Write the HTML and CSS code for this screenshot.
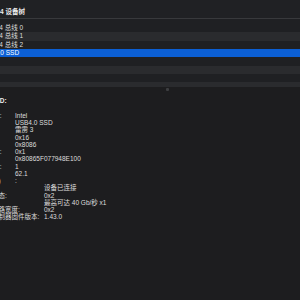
FILE: index.html
```html
<!DOCTYPE html>
<html lang="zh-CN">

<head>
    <meta charset="UTF-8" />
    <meta name="viewport" content="width=device-width, initial-scale=1.0" />
    <title>系统信息 - 雷雳/USB4</title>
    <link rel="stylesheet" href="styles.css">
</head>

<body>
    <div class="header">
        <span class="title">雷雳/USB4 设备树</span>
    </div>

    <div class="tree">
        <div class="tree-row"><span class="bus">USB4 总线 0</span></div>
        <div class="tree-row stripe"><span class="bus">USB4 总线 1</span></div>
        <div class="tree-row"><span class="bus">USB4 总线 2</span></div>
        <div class="tree-row selected"><span class="device">USB4.0 SSD</span></div>
        <div class="tree-row"></div>
        <div class="tree-row stripe"></div>
        <div class="tree-row"></div>
        <div class="tree-row stripe"></div>
    </div>

    <div class="divider">
        <div class="handle"></div>
    </div>

    <div class="details">
        <div class="heading">USB4.0 SSD:</div>
        <div class="blank"></div>

        <div class="kv"><span class="key">供应商名称:</span><span>Intel</span></div>
        <div class="kv"><span class="key">设备名称:</span><span>USB4.0 SSD</span></div>
        <div class="kv"><span class="key">模式:</span><span>雷雳 3</span></div>
        <div class="kv"><span class="key">设备 ID:</span><span>0x16</span></div>
        <div class="kv"><span class="key">供应商 ID:</span><span>0x8086</span></div>
        <div class="kv"><span class="key">设备修订版:</span><span>0x1</span></div>
        <div class="kv"><span class="key">UID:</span><span>0x80865F077948E100</span></div>
        <div class="kv"><span class="key">路由字符串:</span><span>1</span></div>
        <div class="kv"><span class="key">固件版本:</span><span>62.1</span></div>
        <div class="kv port"><span class="key">端口 (上游)</span><span>:</span></div>

        <div class="kv sub"><span class="key">状态:</span><span>设备已连接</span></div>
        <div class="kv sub"><span class="key">链路状态:</span><span>0x2</span></div>
        <div class="kv sub"><span class="key">速度:</span><span>最高可达 40 Gb/秒 x1</span></div>
        <div class="kv sub"><span class="key">当前链路宽度:</span><span>0x2</span></div>
        <div class="kv sub"><span class="key">链路控制器固件版本:</span><span>1.43.0</span></div>
    </div>
</body>

</html>
```

FILE: styles.css
```css
body {
    margin: 0;
    width: 300px;
    height: 300px;
    overflow: hidden;
    background-color: #1e1e20;
    color: #dedede;
    font-family: "Liberation Sans", "Noto Sans CJK SC", sans-serif;
    font-size: 6.5px;
}

.header {
    height: 18px;
    border-bottom: 1px solid #38393c;
    background-color: #202124;
    display: flex;
    align-items: center;
    overflow: hidden;
    white-space: nowrap;
}

.title {
    margin-left: -28.5px;
    margin-top: 4px;
    font-weight: bold;
    color: #ececec;
}

.tree {
    height: 68px;
    padding-top: 5px;
    box-sizing: border-box;
    overflow: hidden;
    background-color: #1f2023;
}

.tree-row {
    height: 8.33px;
    line-height: 8.33px;
    white-space: nowrap;
    overflow: hidden;
}

.stripe {
    background-color: #2a2b2e;
}

.selected {
    background-color: #0b5fd5;
    color: #ffffff;
}

.bus {
    margin-left: -14px;
}

.device {
    margin-left: -18.5px;
}

.divider {
    height: 5px;
    padding-left: 166px;
    padding-top: 1px;
    box-sizing: border-box;
    background-color: #1d1d1f;
}

.handle {
    width: 3px;
    height: 3px;
    border-radius: 1px;
    background-color: #3d3e41;
}

.details {
    padding-top: 5.4px;
    background-color: #1d1d1f;
    height: 208px;
    overflow: hidden;
}

.heading,
.kv,
.blank {
    height: 7.25px;
    line-height: 7.25px;
    white-space: nowrap;
}

.heading {
    margin-left: -33.5px;
    font-weight: bold;
    color: #ececec;
}

.kv {
    display: flex;
    margin-left: -32.8px;
}

.kv .key {
    width: 47.8px;
    flex: none;
}

.kv.port {
    margin-left: -31.5px;
}

.kv.port .key {
    width: 46.5px;
}

.kv.sub {
    margin-left: -21px;
}

.kv.sub .key {
    width: 65px;
}
```
